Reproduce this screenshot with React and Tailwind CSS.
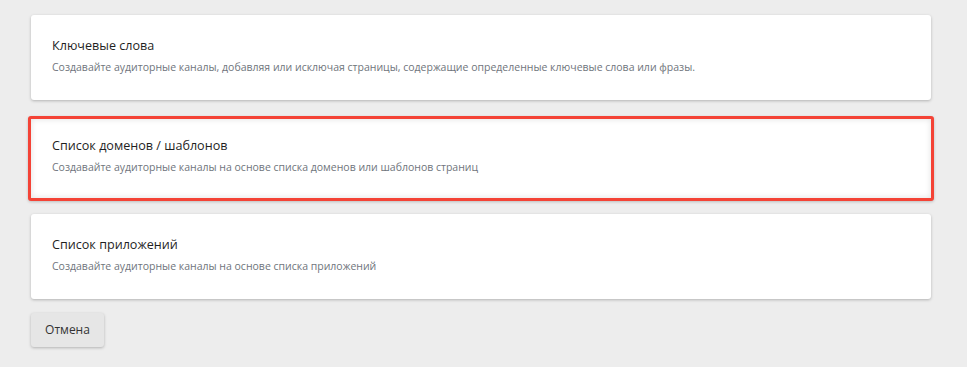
export default function App() {
  const font = { fontFamily: '"Open Sans", "Noto Sans", sans-serif' };
  return (
    <div className="min-h-[367px] w-full bg-[#ededed] pl-[31px] pr-[36px] pt-[15px]" style={font}>
      <div className="flex h-[85px] flex-col rounded-[3px] bg-white pl-[21px] pt-[22px] shadow-[0_1px_3px_rgba(0,0,0,0.25)]">
        <div className="text-[12.6px] leading-[18px] text-[#1f1f1f]">Ключевые слова</div>
        <div className="mt-[5px] text-[10.5px] leading-[15px] text-[#6f757c]">
          Создавайте аудиторные каналы, добавляя или исключая страницы, содержащие определенные ключевые слова или фразы.
        </div>
      </div>
      <div className="-mx-[3px] mt-[16px] flex h-[85px] flex-col rounded-[3px] border-[3px] border-[#f44336] bg-white pl-[21px] pt-[18px] shadow-[inset_0_0_6px_rgba(0,0,0,0.12),0_1px_3px_rgba(0,0,0,0.2)]">
        <div className="text-[12.6px] leading-[18px] text-[#1f1f1f]">Список доменов / шаблонов</div>
        <div className="mt-[5px] text-[10.5px] leading-[15px] text-[#6f757c]">
          Создавайте аудиторные каналы на основе списка доменов или шаблонов страниц
        </div>
      </div>
      <div className="mt-[13px] flex h-[85px] flex-col rounded-[3px] bg-white pl-[21px] pt-[22px] shadow-[0_1px_3px_rgba(0,0,0,0.25)]">
        <div className="text-[12.6px] leading-[18px] text-[#1f1f1f]">Список приложений</div>
        <div className="mt-[5px] text-[10.5px] leading-[15px] text-[#6f757c]">
          Создавайте аудиторные каналы на основе списка приложений
        </div>
      </div>
      <button className="mt-[14px] flex h-[34px] w-[73px] items-center justify-center rounded-[3px] bg-[#e6e6e6] text-[12px] text-[#333333] shadow-[0_1px_3px_rgba(0,0,0,0.25)]">
        Отмена
      </button>
    </div>
  );
}
